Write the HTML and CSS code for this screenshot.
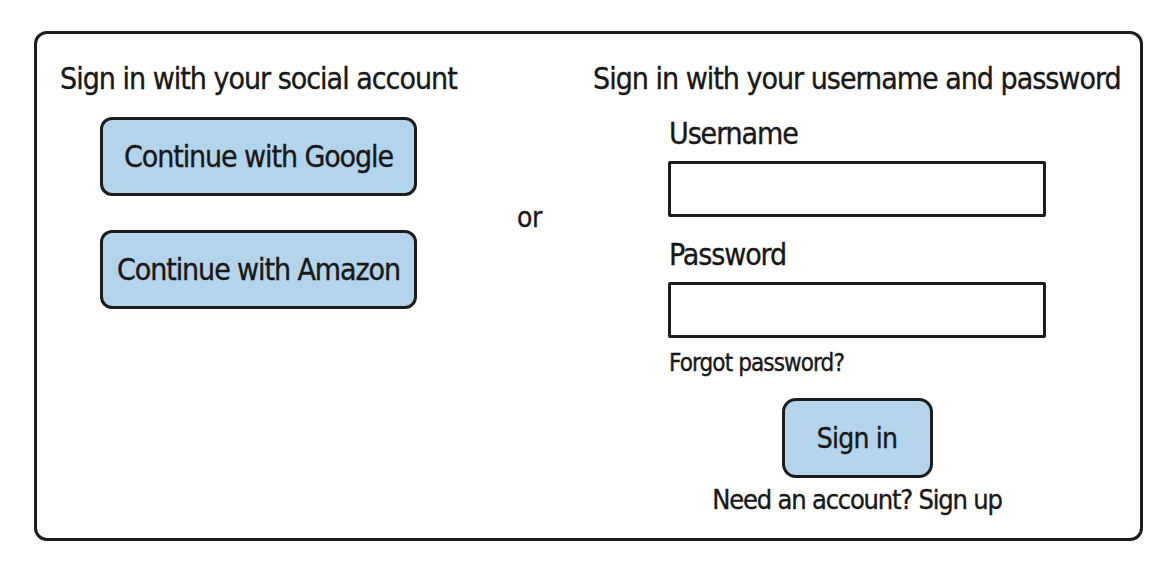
FILE: index.html
```html
<!DOCTYPE html>
<html lang="en">
<head>
  <meta charset="UTF-8">
  <meta name="viewport" content="width=device-width, initial-scale=1.0">
  <title>Sign in</title>
  <link rel="stylesheet" href="styles.css">
</head>
<body>
  <div class="panel">
    <section class="social">
      <h2 class="heading">Sign in with your social account</h2>
      <div class="social-buttons">
        <button class="btn btn-social" type="button">Continue with Google</button>
        <button class="btn btn-social" type="button">Continue with Amazon</button>
      </div>
    </section>

    <div class="divider">or</div>

    <section class="login">
      <h2 class="heading">Sign in with your username and password</h2>
      <form class="login-form">
        <label class="field-label" for="username">Username</label>
        <input class="field" id="username" type="text">
        <label class="field-label field-label-next" for="password">Password</label>
        <input class="field" id="password" type="password">
        <a class="forgot" href="#">Forgot password?</a>
        <div class="actions">
          <button class="btn btn-submit" type="submit">Sign in</button>
          <p class="signup">Need an account? Sign up</p>
        </div>
      </form>
    </section>
  </div>
</body>
</html>
```

FILE: styles.css
```css
body {
  margin: 0;
  padding: 0;
  background: #ffffff;
  color: #181818;
  font-family: "DejaVu Sans Condensed", "DejaVu Sans", sans-serif;
  font-stretch: condensed;
  -webkit-text-stroke: 0.35px currentColor;
}

.panel {
  display: flex;
  box-sizing: border-box;
  width: 1109px;
  height: 510px;
  margin: 31px 0 0 34px;
  border: 3px solid #1c1c1c;
  border-radius: 13px;
  padding-top: 25px;
}

.heading {
  margin: 0;
  font-size: 30px;
  font-weight: normal;
  letter-spacing: -1px;
  line-height: 40px;
  white-space: nowrap;
}

/* left column */

.social {
  flex: 0 0 457px;
  min-width: 0;
  padding-left: 23px;
}

.social-buttons {
  display: flex;
  flex-direction: column;
  gap: 34px;
  margin: 18px 0 0 40px;
}

.btn {
  display: flex;
  align-items: center;
  justify-content: center;
  box-sizing: border-box;
  padding: 0;
  border: 3px solid #1c1c1c;
  border-radius: 12px;
  background-color: #b4d4ec;
  color: #181818;
  font-family: inherit;
  font-stretch: condensed;
  white-space: nowrap;
  cursor: pointer;
}

.btn-social {
  width: 317px;
  height: 79px;
  font-size: 30px;
  letter-spacing: -1.1px;
}

/* middle */

.divider {
  flex: 0 0 76px;
  min-width: 0;
  padding-top: 141px;
  font-size: 28px;
  letter-spacing: -0.5px;
  line-height: 36px;
}

/* right column */

.login {
  flex: 1;
  min-width: 0;
}

.login-form {
  display: flex;
  flex-direction: column;
  align-items: flex-start;
  width: 378px;
  margin: 17px 0 0 75px;
}

.field-label {
  padding-left: 1px;
  font-size: 30px;
  letter-spacing: -1.1px;
  line-height: 36px;
}

.field-label-next {
  margin-top: 20px;
}

.field {
  box-sizing: border-box;
  width: 378px;
  height: 56px;
  margin-top: 9px;
  border: 3px solid #1c1c1c;
  border-radius: 2px;
  background: #ffffff;
}

.forgot {
  margin-top: 10px;
  padding-left: 1px;
  color: #181818;
  text-decoration: none;
  font-size: 24px;
  letter-spacing: -0.9px;
  line-height: 30px;
}

.actions {
  display: flex;
  flex-direction: column;
  align-items: center;
  align-self: stretch;
  margin-top: 20px;
}

.btn-submit {
  width: 151px;
  height: 80px;
  border-radius: 14px;
  font-size: 28px;
  letter-spacing: -0.8px;
}

.signup {
  margin: 4px 0 0;
  font-size: 27px;
  letter-spacing: -1.2px;
  line-height: 36px;
  white-space: nowrap;
}
```
